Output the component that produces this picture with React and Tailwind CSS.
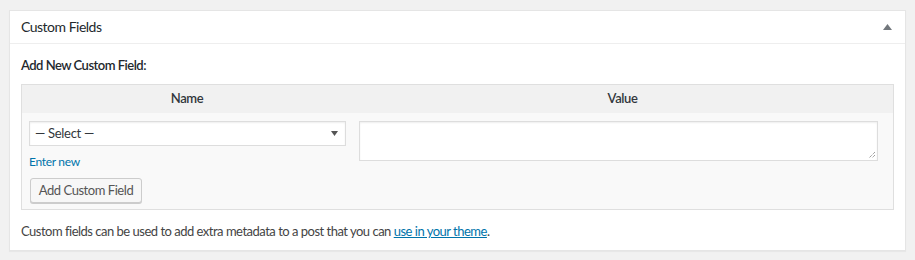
import React from "react";

export default function App() {
  return (
    <div className="w-[915px] h-[260px] bg-[#f1f1f1] pt-[10px] pl-[9px] text-[#444]" style={{ fontFamily: 'Lato, "Liberation Sans", Arial, sans-serif' }}>
      <div className="w-[897px] h-[241px] bg-white border border-[#e5e5e5] shadow-[0_1px_1px_rgba(0,0,0,0.04)]">
        <div className="h-[33px] border-b border-[#eeeeee] flex items-center justify-between pl-[11px] pr-[12px]">
          <h2 className="text-[14px] tracking-[-0.5px] text-[#23282d] leading-none">Custom Fields</h2>
          <svg width="9" height="6" viewBox="0 0 9 6" className="mr-[1px]">
            <path d="M4.5 0 L9 6 L0 6 Z" fill="#72777c" />
          </svg>
        </div>
        <div className="px-[11px]">
          <p className="text-[13px] tracking-[-0.5px] font-semibold text-[#23282d] mt-[12px] leading-[18px]">Add New Custom Field:</p>
          <div className="mt-[10px] border border-[#dfdfdf] bg-[#f9f9f9] w-[873px] h-[126px]">
            <div className="grid grid-cols-[330px_1fr] bg-[#f1f1f1] h-[28px] items-center text-[13px] tracking-[-0.4px] font-semibold text-[#32373c]">
              <div className="text-center">Name</div>
              <div className="text-center">Value</div>
            </div>
            <div className="grid grid-cols-[330px_1fr]">
              <div className="pl-[7px] pt-[8px]">
                <div className="w-[317px] h-[25px] bg-white border border-[#dddddd] shadow-[inset_0_1px_2px_rgba(0,0,0,0.07)] flex items-center justify-between pl-[5px] pr-[7px] text-[13px] tracking-[-0.3px] text-[#32373c]">
                  <span>— Select —</span>
                  <svg width="7" height="5" viewBox="0 0 7 5">
                    <path d="M0 0 L7 0 L3.5 5 Z" fill="#555" />
                  </svg>
                </div>
                <a className="block mt-[8px] text-[12px] tracking-[-0.3px] text-[#0073aa] leading-[16px]">Enter new</a>
                <button className="mt-[8px] ml-[1px] w-[112px] h-[25px] rounded-[3px] border border-[#cccccc] bg-[#f7f7f7] shadow-[0_1px_0_#cccccc] text-[13px] tracking-[-0.45px] text-[#555] leading-none">
                  Add Custom Field
                </button>
              </div>
              <div className="pl-[7px] pt-[8px]">
                <div className="relative w-[519px] h-[40px] bg-white border border-[#dddddd] shadow-[inset_0_1px_2px_rgba(0,0,0,0.07)]">
                  <svg width="8" height="8" viewBox="0 0 8 8" className="absolute right-[1px] bottom-[1px]">
                    <path d="M7 1 L1 7 M7 4 L4 7" stroke="#777" strokeWidth="1" strokeDasharray="1 1" />
                  </svg>
                </div>
              </div>
            </div>
          </div>
          <p className="mt-[12px] text-[13px] tracking-[-0.5px] text-[#444] leading-[18px]">
            Custom fields can be used to add extra metadata to a post that you can{" "}
            <a className="text-[#0073aa] underline">use in your theme</a>.
          </p>
        </div>
      </div>
    </div>
  );
}
